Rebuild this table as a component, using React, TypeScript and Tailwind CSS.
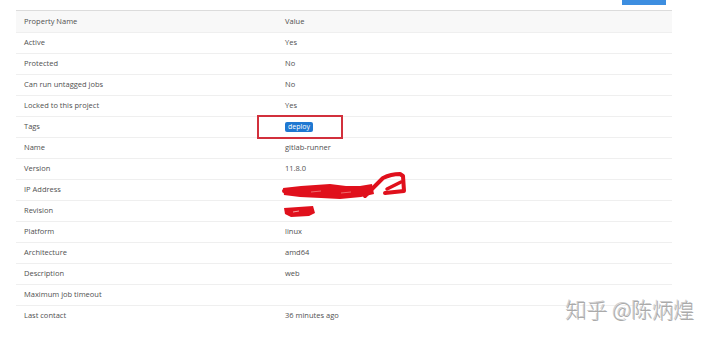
import React from "react";

const rows: [string, React.ReactNode][] = [
  ["Active", "Yes"],
  ["Protected", "No"],
  ["Can run untagged jobs", "No"],
  ["Locked to this project", "Yes"],
  ["Tags", "TAGS"],
  ["Name", "gitlab-runner"],
  ["Version", "11.8.0"],
  ["IP Address", "IP"],
  ["Revision", "REV"],
  ["Platform", "linux"],
  ["Architecture", "amd64"],
  ["Description", "web"],
  ["Maximum job timeout", ""],
  ["Last contact", "36 minutes ago"],
];

function Value({ v }: { v: React.ReactNode }) {
  if (v === "TAGS") {
    return (
      <div className="relative h-full flex items-center">
        <span className="bg-[#1f78d1] text-white rounded-[2px] px-[3px] h-[10px] leading-[10px] text-[7px]">deploy</span>
        <div className="absolute left-[-28px] top-[-2px] w-[86px] h-[24px] border-2 border-[#d2303c]" />
      </div>
    );
  }
  return <>{v}</>;
}

function IpScribble() {
  return (
    <svg width="130" height="30" viewBox="0 0 130 30" className="absolute left-[4px] top-[-8px] overflow-visible">
      <path
        d="M2 16 L 20 14 L 49 12 L 65 14 L 79 14 L 91 12 L 93 22 L 80 25 L 59 27 L 40 26 L 19 25 L 3 23 Z"
        fill="#e0101c"
      />
      <path d="M3 19 L 30 18 L 55 20 L 88 19" stroke="#e0101c" strokeWidth="4" fill="none" strokeLinecap="round" />
      <path
        d="M84 24 L 95 13 L 102 6 C 108 3, 114 2, 119 2 L 122 4 L 123 19 L 104 21"
        stroke="#e0101c"
        strokeWidth="4"
        fill="none"
        strokeLinecap="round"
        strokeLinejoin="round"
      />
      <path d="M106 17 L 120 10" stroke="#e0101c" strokeWidth="3.5" strokeLinecap="round" />
      <path d="M30 20 L 40 19 M 60 21 L 70 20" stroke="#f08080" strokeWidth="0.8" />
    </svg>
  );
}

function RevScribble() {
  return (
    <svg width="36" height="14" viewBox="0 0 36 14" className="absolute left-[6px] top-[4px]">
      <path d="M1 3 L 30 1 L 32 8 L 26 11 L 8 12 L 2 9 Z" fill="#e0101c" />
      <path d="M10 7 L 16 6" stroke="#f4a0a0" strokeWidth="1" />
    </svg>
  );
}

export default function App() {
  return (
    <div className="relative w-[720px] h-[341px] bg-white overflow-hidden text-[#505050]" style={{ fontFamily: '"Open Sans", "Noto Sans", sans-serif' }}>
      <div className="h-[10px] w-[656px] ml-4 flex justify-end">
        <div className="w-[44px] h-[5px] bg-[#3d8ee0] mr-[6px]" />
      </div>
      <div className="w-[656px] ml-4 border-t border-[#dcdcdc] text-[7.5px]">
        <div className="flex h-[21px] items-center bg-[#f8f8f8]">
          <div className="w-[261px] pl-2">Property Name</div>
          <div className="pl-2">Value</div>
        </div>
        {rows.map(([k, v]) => (
          <div key={k} className="flex h-[21px] items-center border-t border-[#efefef]">
            <div className="w-[261px] pl-2">{k}</div>
            <div className="pl-2 relative h-full flex items-center">
              {v === "IP" ? <IpScribble /> : v === "REV" ? <RevScribble /> : <Value v={v} />}
            </div>
          </div>
        ))}
      </div>
      <div
        className="absolute left-[566px] top-[296px] text-[21px] leading-[26px] text-[#aaaaaa] whitespace-nowrap"
        style={{ fontFamily: '"Noto Sans CJK SC", sans-serif', fontWeight: 300, textShadow: "1px 1px 0 #fff, -1px -1px 0 #cfcfcf" }}
      >
        知乎 @陈炳煌
      </div>
    </div>
  );
}
